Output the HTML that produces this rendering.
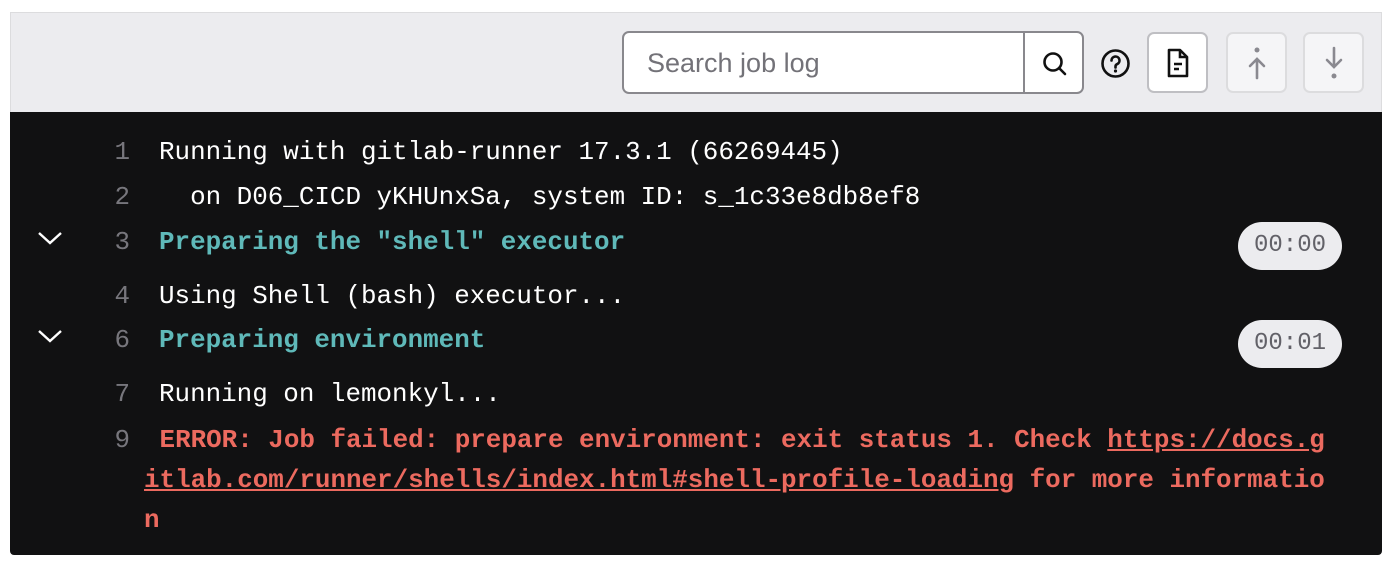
<!DOCTYPE html>
<html><head><meta charset="utf-8"><style>
*{box-sizing:border-box;margin:0;padding:0}
body{width:1386px;height:564px;background:#fff;position:relative;overflow:hidden;font-family:"Liberation Sans",sans-serif}
.bar{position:absolute;left:10px;top:12px;width:1372px;height:100px;background:#ececef;border:1px solid #dcdcde;border-bottom:none}
.search{position:absolute;left:622px;top:31px;width:462px;height:63px;border:2px solid #89888d;border-radius:7px;background:#fff}
.search .ph{position:absolute;left:23px;top:15px;font-size:27px;color:#737278}
.search .div{position:absolute;left:399px;top:0;width:2px;height:59px;background:#89888d}
.btn{position:absolute;top:32px;width:61px;height:61px;border-radius:7px;border:2px solid #bfbfc3;background:#fff}
.btn.dis{background:#f5f5f7;border-color:#dcdcde}
.term{position:absolute;left:10px;top:112px;width:1372px;height:443px;background:#111112;border-radius:0 0 4px 4px}
.l{position:absolute;font-family:"Liberation Mono",monospace;font-size:25.9px;white-space:pre;line-height:30px;color:#fff}
.n{position:absolute;font-family:"Liberation Mono",monospace;font-size:25.9px;color:#77767c;width:40px;text-align:right;line-height:30px}
.t{color:#5fb9b9;font-weight:bold}
.e{color:#ec6a5f;font-weight:bold}
.badge{position:absolute;left:1238px;width:104px;height:48px;border-radius:24px;background:#ececef;color:#626168;font-family:"Liberation Mono",monospace;font-size:24px;line-height:48px;text-align:center}
.chev{position:absolute;left:37px}
</style></head><body>
<div class="bar"></div>
<div class="search"><div class="ph">Search job log</div><div class="div"></div>
<svg style="position:absolute;left:416px;top:16px" width="30" height="30" viewBox="0 0 30 30"><circle cx="13" cy="13" r="8.5" fill="none" stroke="#111" stroke-width="2.6"/><path d="M19 19l6 6" stroke="#111" stroke-width="2.6" stroke-linecap="round"/></svg></div>
<svg style="position:absolute;left:1100px;top:48px" width="31" height="31" viewBox="0 0 31 31"><circle cx="15.5" cy="15.5" r="13" fill="none" stroke="#111" stroke-width="2.6"/><path d="M11.5 12.5a4 4 0 1 1 5.5 3.7c-1 .5-1.5 1.2-1.5 2.3v1" fill="none" stroke="#111" stroke-width="2.6" stroke-linecap="round"/><circle cx="15.5" cy="23" r="1.6" fill="#111"/></svg>
<div class="btn" style="left:1147px"><svg style="position:absolute;left:17px;top:14px" width="24" height="30" viewBox="0 0 24 30"><path d="M3 2h11l7 7v19H3z" fill="none" stroke="#111" stroke-width="2.6" stroke-linejoin="round"/><path d="M14 2v7h7M8 16h8M8 21h5" fill="none" stroke="#111" stroke-width="2.6"/></svg></div>
<div class="btn dis" style="left:1226px"><svg style="position:absolute;left:17px;top:12px" width="24" height="34" viewBox="0 0 24 34"><circle cx="12" cy="4" r="2.5" fill="#8a8990"/><path d="M12 32V13M5 20l7-7 7 7" fill="none" stroke="#8a8990" stroke-width="2.6" stroke-linecap="round"/></svg></div>
<div class="btn dis" style="left:1303px"><svg style="position:absolute;left:17px;top:12px" width="24" height="34" viewBox="0 0 24 34"><circle cx="12" cy="30" r="2.5" fill="#8a8990"/><path d="M12 2v19M5 14l7 7 7-7" fill="none" stroke="#8a8990" stroke-width="2.6" stroke-linecap="round"/></svg></div>
<div class="term"></div>
<div class="n" style="left:90px;top:137px">1</div><div class="l" style="left:159px;top:137px">Running with gitlab-runner 17.3.1 (66269445)</div>
<div class="n" style="left:90px;top:182px">2</div><div class="l" style="left:159px;top:182px">  on D06_CICD yKHUnxSa, system ID: s_1c33e8db8ef8</div>
<svg class="chev" style="top:230px" width="26" height="16" viewBox="0 0 26 16"><path d="M2 3l11 10 11-10" fill="none" stroke="#fff" stroke-width="2.4"/></svg>
<div class="n" style="left:90px;top:227px">3</div><div class="l t" style="left:159px;top:227px">Preparing the "shell" executor</div>
<div class="badge" style="top:222px">00:00</div>
<div class="n" style="left:90px;top:281px">4</div><div class="l" style="left:159px;top:281px">Using Shell (bash) executor...</div>
<svg class="chev" style="top:328px" width="26" height="16" viewBox="0 0 26 16"><path d="M2 3l11 10 11-10" fill="none" stroke="#fff" stroke-width="2.4"/></svg>
<div class="n" style="left:90px;top:325px">6</div><div class="l t" style="left:159px;top:325px">Preparing environment</div>
<div class="badge" style="top:320px">00:01</div>
<div class="n" style="left:90px;top:379px">7</div><div class="l" style="left:159px;top:379px">Running on lemonkyl...</div>
<div class="n" style="left:90px;top:425px">9</div>
<div class="l e" style="left:144px;top:425px"> ERROR: Job failed: prepare environment: exit status 1. Check <u>https://docs.g</u></div>
<div class="l e" style="left:144px;top:465px"><u>itlab.com/runner/shells/index.html#shell-profile-loading</u> for more informatio</div>
<div class="l e" style="left:144px;top:505px">n</div>
</body></html>
